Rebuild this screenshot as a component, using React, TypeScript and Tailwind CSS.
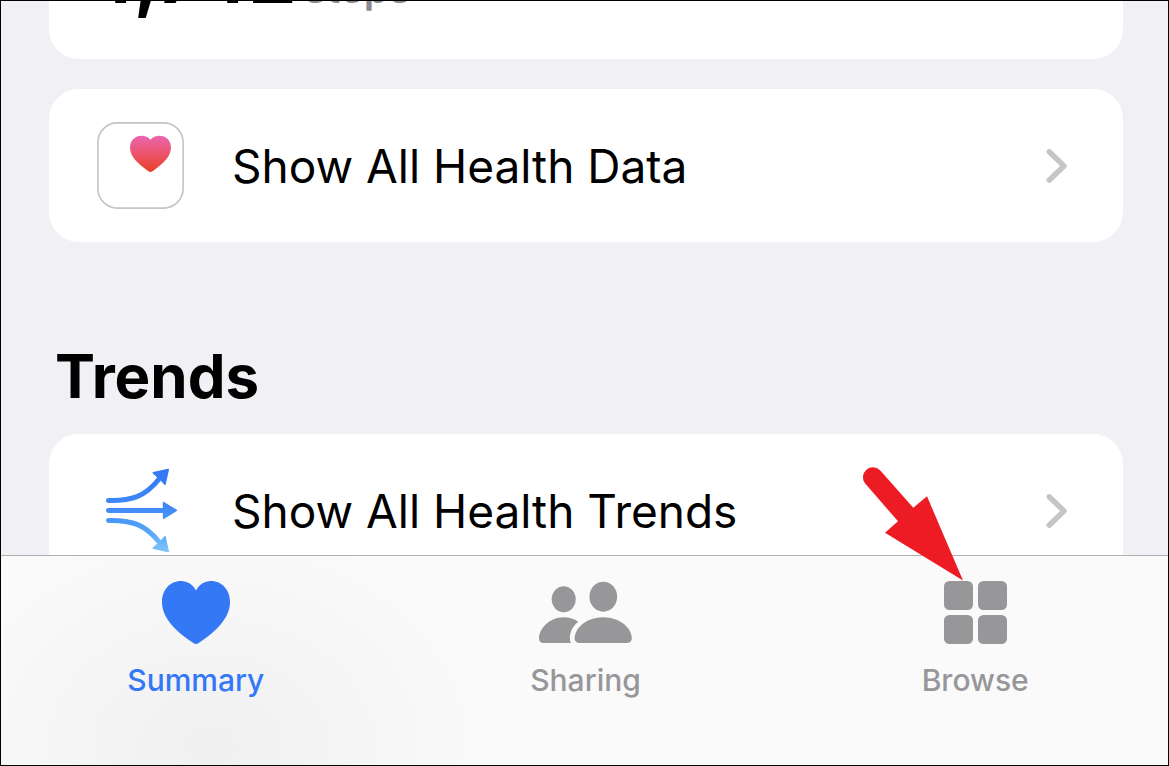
import { useState } from 'react'
import type { ReactNode } from 'react'
import clsx from 'clsx'

type Tab = 'Summary' | 'Sharing' | 'Browse'

function HealthIcon() {
  return (
    <svg viewBox="0 0 87 87" className="size-[87px] shrink-0" aria-hidden="true">
      <defs>
        <linearGradient id="heart" x1="0" y1="0" x2="0" y2="1">
          <stop offset="0" stopColor="#ea67b0" />
          <stop offset="1" stopColor="#eb4025" />
        </linearGradient>
      </defs>
      <rect x="0.9" y="0.9" width="85.2" height="85.2" rx="19.5" fill="#fff" stroke="#c4c4c6" strokeWidth="1.6" />
      <path
        d="M53.5 50C52.6 50 51.5 49.2 50.3 48.4C39.6 41.2 33 33.7 33 25.6C33 18.6 38 13.7 44.5 13.7C48.2 13.7 51.5 15.2 53.5 17.7C55.5 15.2 58.8 13.7 62.5 13.7C69 13.7 74 18.6 74 25.6C74 33.7 67.4 41.2 56.7 48.4C55.5 49.2 54.4 50 53.5 50Z"
        fill="url(#heart)"
      />
    </svg>
  )
}

function TrendsIcon() {
  return (
    <svg viewBox="0 0 87 87" className="size-[87px] shrink-0" aria-hidden="true">
      <defs>
        <linearGradient id="trend" gradientUnits="userSpaceOnUse" x1="0" y1="0" x2="0" y2="87">
          <stop offset="0" stopColor="#3275f5" />
          <stop offset="0.5" stopColor="#418cf7" />
          <stop offset="0.72" stopColor="#52a3f8" />
          <stop offset="1" stopColor="#82c8fa" />
        </linearGradient>
      </defs>
      <g fill="none" stroke="url(#trend)" strokeWidth="5" strokeLinecap="round">
        <path d="M11.5 33.4C34 34 48 30 62.5 11.5" />
        <path d="M11.5 43.4L67 43.5" />
        <path d="M11.5 53.4C34 53 48 57 62.5 75.5" />
      </g>
      <g fill="url(#trend)" stroke="url(#trend)" strokeWidth="1.6" strokeLinejoin="round">
        <path d="M71.2 2.5L56.4 5.9L60.6 9.6L64.4 13.2L68 17.2Z" />
        <path d="M66.6 35.6L79.4 43.4L66.6 51.2Z" />
        <path d="M71.2 84.5L56.4 81.1L60.6 77.4L64.4 73.8L68 69.8Z" />
      </g>
    </svg>
  )
}

function Chevron() {
  return (
    <svg viewBox="0 0 21 34" className="h-[34px] w-[21px] shrink-0 self-center" aria-hidden="true">
      <path d="M3.2 2.8L18 17L3.2 31.2" fill="none" stroke="#c5c5c7" strokeWidth="5.4" strokeLinecap="round" strokeLinejoin="round" />
    </svg>
  )
}

function SummaryIcon() {
  return (
    <svg viewBox="0 0 68 63" className="h-[63px] w-[68px]" fill="currentColor" aria-hidden="true">
      <path d="M34 63C32.6 63 31 61.8 29.5 60.8C12 48.8 0 36 0 21C0 8.8 8 0 19 0C25.5 0 31 3.6 34 9.5C37 3.6 42.5 0 49 0C60 0 68 8.8 68 21C68 36 56 48.8 38.5 60.8C37 61.8 35.4 63 34 63Z" />
    </svg>
  )
}

function SharingIcon() {
  return (
    <svg viewBox="0 0 93 63" className="h-[63px] w-[93px]" fill="currentColor" aria-hidden="true">
      <ellipse cx="24.7" cy="18.2" rx="12" ry="13" />
      <ellipse cx="64.3" cy="15.7" rx="13.8" ry="15" />
      <path d="M5 62C1.8 62 0 60.5 0 57.5C0 47.5 10.5 36.2 24.7 36.2C30.4 36.2 35.2 37.9 39.3 40.7C33.3 45.5 30.9 51.5 30.9 56.7C30.9 58.8 31.2 60.6 32 62Z" />
      <path d="M41 62C37.5 62 35.6 60.3 35.6 57.2C35.6 48 46.5 36.2 64.2 36.2C81.9 36.2 92.8 48 92.8 57.2C92.8 60.3 90.9 62 87.4 62Z" />
    </svg>
  )
}

function BrowseIcon() {
  return (
    <svg viewBox="0 0 63 63" className="size-[63px]" fill="currentColor" aria-hidden="true">
      <rect width="29" height="29" rx="5.5" />
      <rect x="34" width="29" height="29" rx="5.5" />
      <rect y="34" width="29" height="29" rx="5.5" />
      <rect x="34" y="34" width="29" height="29" rx="5.5" />
    </svg>
  )
}

function Pointer() {
  return (
    <svg
      viewBox="0 0 102 116"
      className="pointer-events-none absolute -top-[115px] -left-[82px] h-[116px] w-[102px]"
      fill="#ed1c24"
      aria-hidden="true"
    >
      <path d="M18.3 4.5L51.3 41.7L65 30.3L101 114.5L23 66.7L36 55.3L3.2 17.6A10 10 0 0 1 18.3 4.5Z" />
    </svg>
  )
}

function Row({ icon, label }: { icon: ReactNode; label: string }) {
  return (
    <button className="flex w-full items-start gap-12 rounded-[30px] bg-white pt-[33px] pr-14 pb-8 pl-12 text-left">
      {icon}
      <span className="flex-1 text-[46px] leading-[88px]">{label}</span>
      <Chevron />
    </button>
  )
}

const tabs: { name: Tab; icon: ReactNode }[] = [
  { name: 'Summary', icon: <SummaryIcon /> },
  { name: 'Sharing', icon: <SharingIcon /> },
  { name: 'Browse', icon: <BrowseIcon /> },
]

export default function App() {
  const [active, setActive] = useState<Tab>('Summary')

  return (
    <div className="flex h-screen flex-col overflow-hidden border border-black bg-[#f1f0f5] font-['Inter',sans-serif] text-black">
      {/* Scrolled content */}
      <main className="min-h-0 flex-1 overflow-hidden pr-[45px] pl-12">
        {/* Steps card, mostly scrolled off the top */}
        <section className="-mt-[74px] flex items-baseline gap-2 rounded-[30px] bg-white pb-9 pl-9">
          <span className="text-[76px] leading-[96px] font-bold">4,742</span>
          <span className="text-[40px] font-semibold text-[#8a8a8e]">steps</span>
        </section>

        <div className="mt-[30px]">
          <Row icon={<HealthIcon />} label="Show All Health Data" />
        </div>

        <h2 className="mt-24 mb-5 pl-1.5 text-[60px] leading-[76px] font-bold">Trends</h2>
        <Row icon={<TrendsIcon />} label="Show All Health Trends" />
      </main>

      {/* Tab bar */}
      <nav className="-mr-0.5 flex h-[210px] shrink-0 items-start border-t border-[#b0b0b2] bg-[#fafafb] bg-[radial-gradient(ellipse_280px_220px_at_210px_190px,#f0f0f1,#fafafb)] pt-[25px]">
        {tabs.map(({ name, icon }) => (
          <button
            key={name}
            onClick={() => setActive(name)}
            className={clsx(
              'flex flex-1 flex-col items-center gap-4 text-3xl leading-10 font-medium',
              active === name ? 'text-[#3478f6]' : 'text-[#979799]',
            )}
          >
            <span className="relative">
              {icon}
              {name === 'Browse' && <Pointer />}
            </span>
            {name}
          </button>
        ))}
      </nav>
    </div>
  )
}
